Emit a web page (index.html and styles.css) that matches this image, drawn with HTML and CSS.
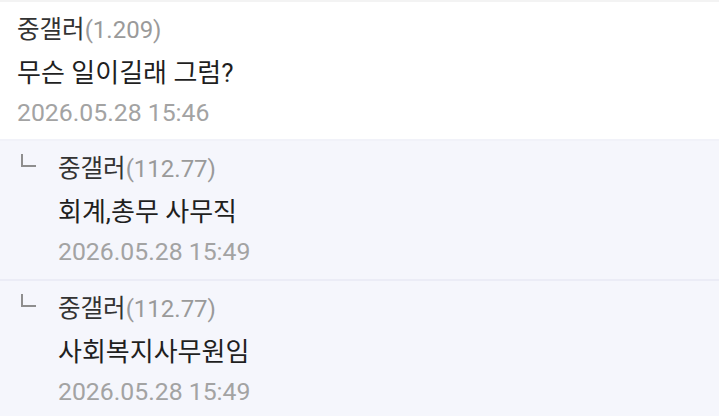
FILE: index.html
```html
<!DOCTYPE html>
<html lang="ko">
<head>
    <meta charset="UTF-8">
    <meta name="viewport" content="width=device-width, initial-scale=1.0">
    <title>댓글</title>
    <link rel="stylesheet" href="styles.css">
</head>
<body>
    <div class="comment-list">
        <div class="comment">
            <div class="comment-body">
                <div class="comment-author">중갤러<span class="comment-ip">(1.209)</span></div>
                <div class="comment-text">무슨 일이길래 그럼?</div>
                <div class="comment-date">2026.05.28 15:46</div>
            </div>
        </div>

        <div class="comment reply">
            <span class="reply-mark"></span>
            <div class="comment-body">
                <div class="comment-author">중갤러<span class="comment-ip">(112.77)</span></div>
                <div class="comment-text">회계,총무 사무직</div>
                <div class="comment-date">2026.05.28 15:49</div>
            </div>
        </div>

        <div class="comment reply">
            <span class="reply-mark"></span>
            <div class="comment-body">
                <div class="comment-author">중갤러<span class="comment-ip">(112.77)</span></div>
                <div class="comment-text">사회복지사무원임</div>
                <div class="comment-date">2026.05.28 15:49</div>
            </div>
        </div>
    </div>
</body>
</html>
```

FILE: styles.css
```css
* {
    box-sizing: border-box;
}

body {
    margin: 0;
    padding: 0;
    background: #f5f6fc;
    font-family: 'Roboto', 'Noto Sans CJK KR', sans-serif;
    overflow: hidden;
}

.comment-list {
    display: flex;
    flex-direction: column;
}

.comment {
    display: flex;
    flex-shrink: 0;
    height: 139px;
    padding: 5px 17px 0 17px;
    background: #ffffff;
    border-top: 2px solid #f3f3f3;
}

.comment.reply {
    height: 140px;
    padding-left: 21px;
    background: #f5f6fc;
    border-top: 2px solid #f1f2f9;
}

.comment.reply + .comment.reply {
    border-top-color: #ebecf6;
}

.reply-mark {
    width: 15px;
    height: 13px;
    margin-top: 8px;
    margin-right: 22px;
    border-left: 2px solid #8e8e8e;
    border-bottom: 2px solid #8e8e8e;
    flex-shrink: 0;
}

.comment-body {
    display: flex;
    flex-direction: column;
}

.comment-author {
    font-size: 24.5px;
    line-height: 45px;
    height: 45px;
    color: #333333;
}

.comment-ip {
    font-size: 24px;
    color: #9a9a9a;
}

.comment-text {
    font-size: 26px;
    line-height: 42px;
    height: 42px;
    color: #1f1f1f;
}

.comment-date {
    font-size: 24.8px;
    line-height: 38px;
    color: #a3a3a3;
}
```
